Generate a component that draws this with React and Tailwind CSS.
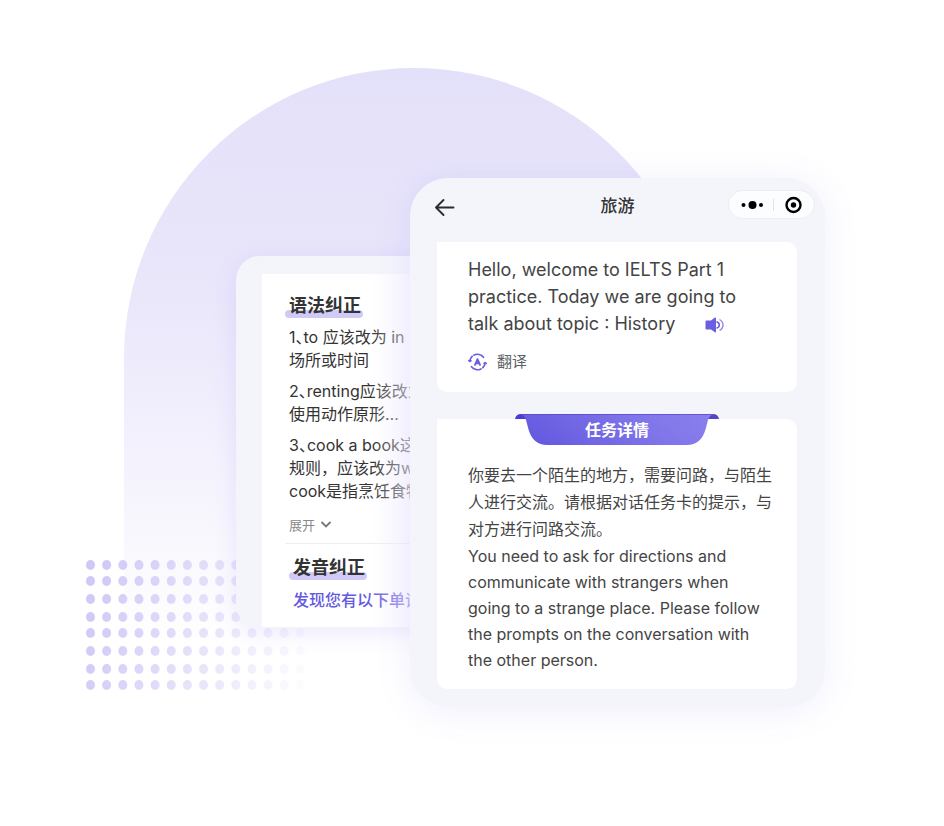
const DOT_COLUMNS = Array.from({ length: 14 }, (_, i) => 4.5 + i * 16.15);
const DOT_ROWS = [5, 21, 39, 57, 73, 91, 109, 125];

function DotPattern({ className }) {
  return (
    <svg className={className} width="220" height="130" viewBox="0 0 220 130" aria-hidden="true">
      <defs>
        <linearGradient id="dotFade" gradientUnits="userSpaceOnUse" x1="0" y1="20" x2="240" y2="84">
          <stop offset="0" stopColor="#cdc8f6" />
          <stop offset="0.5" stopColor="#cdc8f6" stopOpacity="0.52" />
          <stop offset="1" stopColor="#cdc8f6" stopOpacity="0" />
        </linearGradient>
      </defs>
      <g fill="url(#dotFade)">
        {DOT_ROWS.map((y) => DOT_COLUMNS.map((x) => <ellipse key={`${x}-${y}`} cx={x} cy={y} rx="4.5" ry="5" />))}
      </g>
    </svg>
  );
}

function MarkedTitle({ children }) {
  return (
    <h3 className="relative isolate w-fit text-[18px] leading-6 font-bold text-[#333]">
      <span className="absolute -right-0.5 -left-1 bottom-0 -z-10 h-2 rounded-full bg-[#d0cbf6]" />
      {children}
    </h3>
  );
}

function Mark() {
  return <span className="[font-feature-settings:'halt']">、</span>;
}

function FeedbackCard() {
  return (
    <section className="relative mt-[78px] h-[372px] w-[194px] shrink-0 rounded-l-3xl bg-[#f4f5fa] pt-[18px] pl-[26px] shadow-[0_4px_24px_rgba(110,90,240,0.12)]">
      <div className="h-[353px] overflow-hidden bg-white pt-5 pl-[27px] whitespace-nowrap">
        <MarkedTitle>语法纠正</MarkedTitle>
        <div className="mt-2 flex flex-col gap-2 text-[16px] leading-[23px] text-[#333]">
          <p>1<Mark />to 应该改为 in<br />场所或时间</p>
          <p>2<Mark />renting应该改为<br />使用动作原形…</p>
          <p>3<Mark />cook a book这个<br />规则，应该改为write<br />cook是指烹饪食物</p>
        </div>
        <button type="button" className="mt-3 flex items-center gap-1 text-[13px] leading-5 text-[#888]">
          展开
          <svg width="14" height="14" viewBox="0 0 14 14" fill="none" stroke="#777" strokeWidth="1.8" aria-hidden="true">
            <path d="M2.5 4 7 8.5 11.5 4" />
          </svg>
        </button>
        <div className="mt-2 -ml-1 border-t border-[#eeeeee] pt-3 pl-2">
          <MarkedTitle>发音纠正</MarkedTitle>
          <p className="mt-2 text-[16px] leading-6 font-medium text-[#6459e0]">发现您有以下单词</p>
        </div>
      </div>
      <div className="absolute inset-y-0 right-5 w-10 bg-linear-to-r from-[#f4f2fe]/0 to-[#f4f2fe]/60" />
    </section>
  );
}

function Ribbon({ children }) {
  return (
    <h2 className="relative -mt-[5px] flex h-[31px] w-[204px] items-center justify-center self-center text-[16px] leading-6 font-bold text-white">
      <svg className="absolute inset-0" width="204" height="31" viewBox="0 0 204 31" aria-hidden="true">
        <defs>
          <linearGradient id="ribbon" x1="0" y1="0.6" x2="1" y2="0.4">
            <stop offset="0" stopColor="#6459df" />
            <stop offset="0.75" stopColor="#8378ea" />
            <stop offset="1" stopColor="#897eec" />
          </linearGradient>
        </defs>
        <path d="M0 5Q1 0 6 0H14V5Z" fill="#4a3cd4" />
        <path d="M204 5Q203 0 198 0H190V5Z" fill="#5145c8" />
        <path d="M5 0H199Q194.500 1 193 6L190.500 15.500Q186 31 172 31H32Q18 31 13.500 15.500L11 6Q9.500 1 5 0Z" fill="url(#ribbon)" />
        <path d="M5 0H199Q197 .3 196 1H8Q7 .3 5 0Z" fill="#5347ca" opacity=".7" />
      </svg>
      <span className="relative">{children}</span>
    </h2>
  );
}

function PhoneCard() {
  return (
    <section className="relative z-10 -ml-5 w-[415px] shrink-0 rounded-[38px] bg-[#f4f5fa] pb-[18px] shadow-[0_4px_36px_rgba(110,90,240,0.1)]">
      <header className="grid h-16 grid-cols-[1fr_auto_1fr] items-start px-[10px] pt-3">
        <button type="button" aria-label="返回" className="mt-[7px] ml-[14px] w-fit">
          <svg width="22" height="20" viewBox="0 0 22 20" fill="none" stroke="#2b2b2b" strokeWidth="1.9" strokeLinecap="round" strokeLinejoin="round" aria-hidden="true">
            <path d="M19.500 10.500H2M9.500 3 2 10.500 9.500 18" />
          </svg>
        </button>
        <h1 className="mt-1 text-[17px] leading-6 font-medium text-[#333]">旅游</h1>
        <div className="flex h-[29px] w-[87px] items-center justify-self-end rounded-full border border-[#ececf1] bg-[#fcfdfe]">
          <button type="button" aria-label="更多" className="flex flex-1 justify-center">
            <svg width="24" height="10" viewBox="0 0 24 10" fill="#000" aria-hidden="true">
              <circle cx="4.500" cy="5" r="2" />
              <circle cx="13.500" cy="5" r="4" />
              <circle cx="22" cy="5" r="2" />
            </svg>
          </button>
          <span className="h-3 w-px bg-[#e2e2e6]" />
          <button type="button" aria-label="关闭" className="flex w-10 justify-center">
            <svg width="18" height="18" viewBox="0 0 18 18" aria-hidden="true">
              <circle cx="8.500" cy="9" r="7" fill="none" stroke="#000" strokeWidth="2.400" />
              <circle cx="8.500" cy="9" r="2.700" fill="#000" />
            </svg>
          </button>
        </div>
      </header>

      <div className="mr-7 ml-[27px] rounded-[10px] rounded-tl-none bg-white pt-[14px] pb-[18px] pl-[31px] text-[#444]">
        <p className="text-[18px] leading-[27px] whitespace-nowrap">
          Hello, welcome to IELTS Part 1<br />
          practice. Today we are going to<br />
          talk about topic : History
          <button type="button" aria-label="播放" className="ml-[30px] align-[-3px]">
            <svg width="20" height="16" viewBox="0 0 20 16" fill="none" aria-hidden="true">
              <path d="M1.500 3.500H6L9.500 .8Q11 0 11 1.500V14.500Q11 16 9.500 15L6 12.500H1.500Q.5 12.500.5 11.500V4.500Q.5 3.500 1.500 3.500Z" fill="#6a5ee3" />
              <path d="M11.500 4.800Q14.300 5.500 14.300 8T11.500 11.200" stroke="#6a5ee3" strokeWidth="1.500" />
              <path d="M14.500 2.500Q18 4.500 18 8T14.500 13.500" stroke="#8f86eb" strokeWidth="1.400" />
            </svg>
          </button>
        </p>
        <button type="button" className="mt-[13px] flex items-center gap-[10px] text-[15px] leading-6 text-[#5b6066]">
          <svg width="19" height="18" viewBox="0 0 19 18" fill="none" stroke="#6a5ee3" strokeWidth="1.700" strokeLinecap="round" strokeLinejoin="round" aria-hidden="true">
            <path d="M1.800 8A7.700 7.700 0 0 1 4.200 3.400M6 2.100A7.700 7.700 0 0 1 15.500 4.300" />
            <path d="M17.200 10A7.700 7.700 0 0 1 14.800 14.600M13 15.900A7.700 7.700 0 0 1 3.500 13.700" />
            <path d="M.9 7.600 1.900 8.400 2.900 7.600M18.100 10.400 17.100 9.600 16.100 10.400" />
            <path d="M7 11.800 9.500 6.200 12 11.800M8 10.300H11" strokeWidth="1.900" />
          </svg>
          翻译
        </button>
      </div>

      <div className="mt-[27px] mr-7 ml-[27px] flex flex-col rounded-[10px] rounded-tl-none bg-white pb-4 text-[#444]">
        <Ribbon>任务详情</Ribbon>
        <div className="pt-[17px] pl-[31px] text-[16px] whitespace-nowrap">
          <p className="leading-[27px]">
            你要去一个陌生的地方，需要问路，与陌生<br />
            人进行交流。请根据对话任务卡的提示，与<br />
            对方进行问路交流。
          </p>
          <p className="leading-[26px]">
            You need to ask for directions and<br />
            communicate with strangers when<br />
            going to a strange place. Please follow<br />
            the prompts on the conversation with<br />
            the other person.
          </p>
        </div>
      </div>
    </section>
  );
}

export default function App() {
  return (
    <main className="flex min-h-screen justify-center overflow-hidden bg-white font-['Inter','Noto_Sans_CJK_SC',sans-serif]">
      <div className="relative isolate flex w-full max-w-[772px] items-start justify-end pt-[178px] pr-[33px] pb-[119px]">
        <div className="absolute top-[68px] left-[38px] -z-10 h-[578px] w-[580px] rounded-t-full bg-linear-to-b from-[#e3e0f9] via-[#eae7fb] via-40% to-white" />
        <DotPattern className="absolute top-[560px] left-0 -z-10" />
        <FeedbackCard />
        <PhoneCard />
      </div>
    </main>
  );
}
